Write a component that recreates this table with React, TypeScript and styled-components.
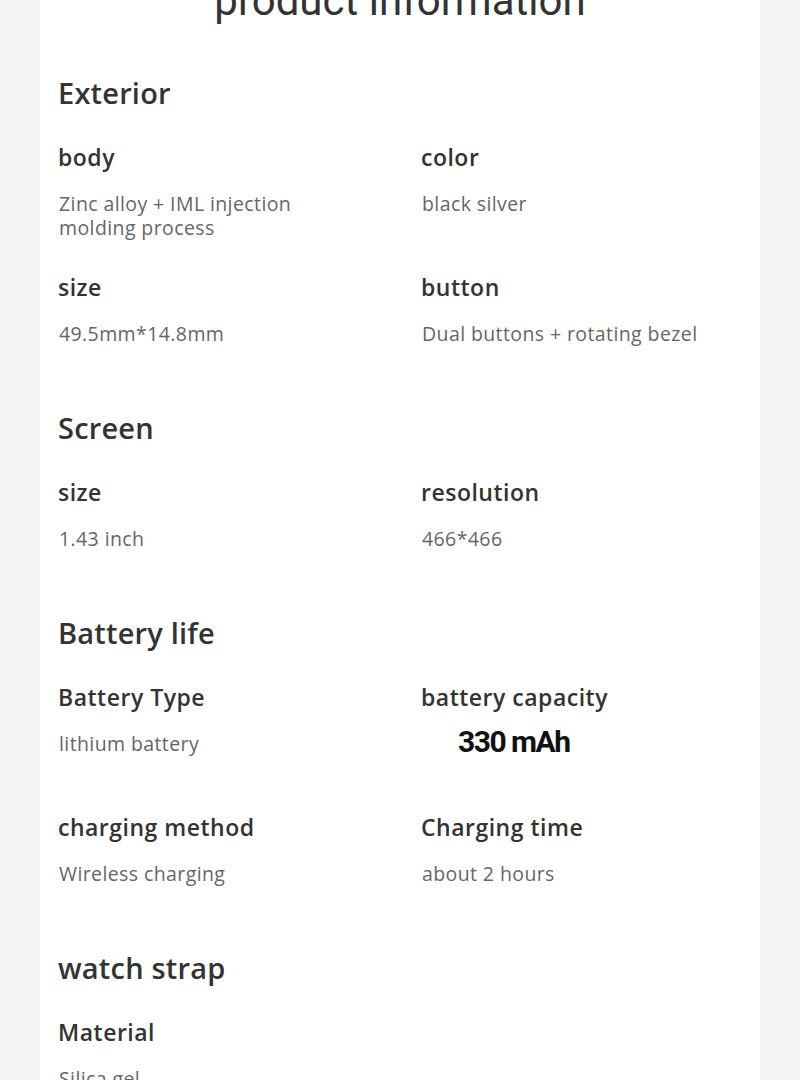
import React from 'react';
import styled, { createGlobalStyle } from 'styled-components';

const GlobalStyle = createGlobalStyle`
  html, body {
    margin: 0;
    padding: 0;
    background: #f4f4f4;
  }
  body {
    font-family: "Open Sans", "Noto Sans", sans-serif;
  }
`;

const Page = styled.div`
  display: flex;
  justify-content: center;
  height: 1080px;
  overflow: hidden;
  background: #f4f4f4;
`;

const Card = styled.div`
  width: 720px;
  background: #ffffff;
  padding: 0 0 0 18px;
  box-sizing: border-box;
`;

const Title = styled.h1`
  margin: -23px 0 48px -18px;
  font-family: Roboto, "Open Sans", sans-serif;
  font-weight: 400;
  font-size: 42px;
  line-height: 48px;
  color: #333333;
  text-align: center;
`;

const SectionBlock = styled.section`
  margin-bottom: 6px;
`;

const SectionTitle = styled.h2`
  margin: 0 0 29px;
  font-size: 29px;
  line-height: 40px;
  font-weight: 600;
  letter-spacing: 0.2px;
  color: #333333;
`;

const SpecGrid = styled.div`
  display: grid;
  grid-template-columns: 363px 1fr;
  grid-auto-rows: 130px;
`;

const SpecCell = styled.div`
  display: flex;
  flex-direction: column;
  gap: 20px;
`;

const SpecLabel = styled.div`
  font-size: 23px;
  line-height: 30px;
  font-weight: 600;
  letter-spacing: 0.5px;
  color: #333333;
`;

const SpecValue = styled.div`
  width: 300px;
  padding-left: 1px;
  font-size: 19.5px;
  line-height: 24px;
  letter-spacing: 0.4px;
  color: #666666;
`;

const Capacity = styled.span`
  display: block;
  margin: -4px 0 0 36px;
  font-family: Roboto, sans-serif;
  font-weight: 700;
  font-size: 30px;
  line-height: 28px;
  letter-spacing: -1.5px;
  color: #111111;
`;

type Spec = {
  label: string;
  value: React.ReactNode;
};

type Section = {
  title: string;
  specs: Spec[];
};

const sections: Section[] = [
  {
    title: 'Exterior',
    specs: [
      { label: 'body', value: 'Zinc alloy + IML injection molding process' },
      { label: 'color', value: 'black silver' },
      { label: 'size', value: '49.5mm*14.8mm' },
      { label: 'button', value: 'Dual buttons + rotating bezel' },
    ],
  },
  {
    title: 'Screen',
    specs: [
      { label: 'size', value: '1.43 inch' },
      { label: 'resolution', value: '466*466' },
    ],
  },
  {
    title: 'Battery life',
    specs: [
      { label: 'Battery Type', value: 'lithium battery' },
      { label: 'battery capacity', value: <Capacity>330 mAh</Capacity> },
      { label: 'charging method', value: 'Wireless charging' },
      { label: 'Charging time', value: 'about 2 hours' },
    ],
  },
  {
    title: 'watch strap',
    specs: [{ label: 'Material', value: 'Silica gel' }],
  },
];

export default function App() {
  return (
    <>
      <GlobalStyle />
      <Page>
        <Card>
          <Title>product information</Title>
          {sections.map((section) => (
            <SectionBlock key={section.title}>
              <SectionTitle>{section.title}</SectionTitle>
              <SpecGrid>
                {section.specs.map((spec) => (
                  <SpecCell key={spec.label}>
                    <SpecLabel>{spec.label}</SpecLabel>
                    <SpecValue>{spec.value}</SpecValue>
                  </SpecCell>
                ))}
              </SpecGrid>
            </SectionBlock>
          ))}
        </Card>
      </Page>
    </>
  );
}
